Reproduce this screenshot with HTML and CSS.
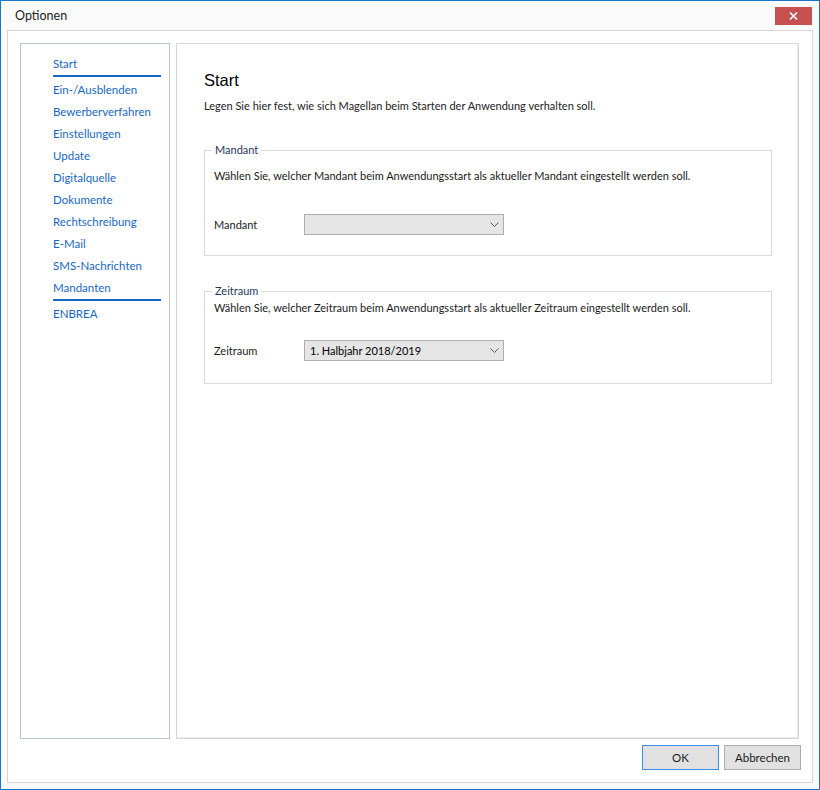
FILE: index.html
```html
<!DOCTYPE html>
<html lang="de">
<head>
  <meta charset="UTF-8" />
  <title>Optionen</title>
  <link rel="stylesheet" href="styles.css">
</head>
<body>
  <div class="window">
    <div class="titlebar">
      <span class="title">Optionen</span>
      <button class="close" aria-label="Schließen">
        <svg width="9" height="8" viewBox="0 0 9 8"><path d="M1 0.5 L8 7.5 M8 0.5 L1 7.5" stroke="#fff" stroke-width="1.6" fill="none"/></svg>
      </button>
    </div>

    <div class="frame">
      <div class="panels">
        <nav class="nav">
          <a href="#" class="nav-item selected">Start</a>
          <a href="#" class="nav-item">Ein-/Ausblenden</a>
          <a href="#" class="nav-item">Bewerberverfahren</a>
          <a href="#" class="nav-item">Einstellungen</a>
          <a href="#" class="nav-item">Update</a>
          <a href="#" class="nav-item">Digitalquelle</a>
          <a href="#" class="nav-item">Dokumente</a>
          <a href="#" class="nav-item">Rechtschreibung</a>
          <a href="#" class="nav-item">E-Mail</a>
          <a href="#" class="nav-item">SMS-Nachrichten</a>
          <a href="#" class="nav-item selected">Mandanten</a>
          <a href="#" class="nav-item">ENBREA</a>
        </nav>

        <div class="content">
          <h1>Start</h1>
          <p class="intro">Legen Sie hier fest, wie sich Magellan beim Starten der Anwendung verhalten soll.</p>

          <fieldset class="group group-mandant">
            <legend>Mandant</legend>
            <p>Wählen Sie, welcher Mandant beim Anwendungsstart als aktueller Mandant eingestellt werden soll.</p>
            <div class="row">
              <label>Mandant</label>
              <div class="combo">
                <span class="combo-value"></span>
                <svg width="9" height="5" viewBox="0 0 9 5"><path d="M0.5 0.5 L4.5 4.5 L8.5 0.5" stroke="#5a5a5a" stroke-width="1" fill="none"/></svg>
              </div>
            </div>
          </fieldset>

          <fieldset class="group group-zeitraum">
            <legend>Zeitraum</legend>
            <p>Wählen Sie, welcher Zeitraum beim Anwendungsstart als aktueller Zeitraum eingestellt werden soll.</p>
            <div class="row">
              <label>Zeitraum</label>
              <div class="combo">
                <span class="combo-value">1. Halbjahr 2018/2019</span>
                <svg width="9" height="5" viewBox="0 0 9 5"><path d="M0.5 0.5 L4.5 4.5 L8.5 0.5" stroke="#5a5a5a" stroke-width="1" fill="none"/></svg>
              </div>
            </div>
          </fieldset>
        </div>
      </div>

      <div class="buttons">
        <button class="btn default">OK</button>
        <button class="btn">Abbrechen</button>
      </div>
    </div>
  </div>
</body>
</html>
```

FILE: styles.css
```css
* {
  box-sizing: border-box;
}

body {
  margin: 0;
  font-family: Lato, "Noto Sans", sans-serif;
  font-size: 11px;
  color: #1a1a1a;
  background: #fff;
}

.window {
  width: 820px;
  height: 790px;
  border: 1px solid #1a74c8;
  background: #fafafa;
  display: flex;
  flex-direction: column;
}

.titlebar {
  height: 29px;
  display: flex;
  align-items: flex-start;
  justify-content: space-between;
  padding: 6px 7px 0 14px;
}

.title {
  font-size: 12.5px;
  line-height: 18px;
  color: #222;
}

.close {
  width: 37px;
  height: 18px;
  border: none;
  padding: 0;
  background: #c75050;
  display: flex;
  align-items: center;
  justify-content: center;
}

.frame {
  flex: 1;
  margin: 0 6px 6px 6px;
  border: 1px solid #d6d6d6;
  background: #fff;
  display: flex;
  flex-direction: column;
  padding: 12px 13px 12px 12px;
}

.panels {
  flex: 1;
  display: flex;
  gap: 6px;
}

.nav {
  width: 150px;
  border: 1px solid #b4c6d4;
  display: flex;
  flex-direction: column;
  padding: 12px 8px 0 32px;
}

.nav-item {
  color: #1767c4;
  text-decoration: none;
  font-size: 11.5px;
  line-height: 16px;
  padding: 0;
  margin-bottom: 6px;
}

.nav-item.selected {
  border-bottom: 2px solid #1767c4;
  padding-bottom: 3px;
  margin-bottom: 5px;
}

.content {
  flex: 1;
  border: 1px solid #d6d6d6;
  box-shadow: inset -1px -1px 0 #ececec;
  padding: 26px 26px 0 27px;
}

h1 {
  margin: 0;
  font-family: "Liberation Sans", Arial, sans-serif;
  font-weight: normal;
  font-size: 16.5px;
  line-height: 20px;
  color: #000;
}

.intro {
  margin: 8px 0 0;
  line-height: 16px;
  color: #222;
}

.group {
  margin: 28px 0 0;
  border: 1px solid #d9d9d9;
  padding: 0 9px 20px 9px;
}

.group legend {
  padding: 0 3px;
  margin-left: -2px;
  line-height: 16px;
  color: #1e3a5c;
}

.group p {
  margin: 10px 0 0;
  line-height: 16px;
}

.group-zeitraum {
  margin-top: 27px;
  padding-bottom: 22px;
}

.group-zeitraum p {
  margin-top: 1px;
}

.row {
  display: flex;
  align-items: center;
  margin-top: 30px;
}

.group-zeitraum .row {
  margin-top: 24px;
}

.row label {
  width: 90px;
}

.combo {
  width: 200px;
  height: 21px;
  border: 1px solid #adadad;
  background: #e5e5e5;
  display: flex;
  align-items: center;
  justify-content: space-between;
  padding: 0 4px 0 5px;
}

.combo-value {
  color: #000;
}

.buttons {
  display: flex;
  justify-content: flex-end;
  gap: 5px;
  margin-top: 6px;
  margin-right: -2px;
}

.btn {
  width: 77px;
  height: 25px;
  border: 1px solid #adadad;
  background: #e1e1e1;
  font-family: Lato, "Noto Sans", sans-serif;
  font-size: 11.5px;
  color: #1a1a1a;
  padding: 0;
}

.btn.default {
  border-color: #3c8fe6;
}
```
